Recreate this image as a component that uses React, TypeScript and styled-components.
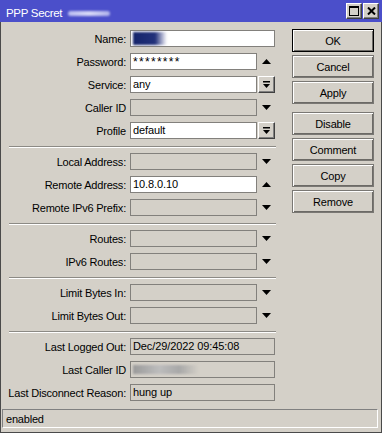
import React from "react";
import styled, { createGlobalStyle } from "styled-components";

const Global = createGlobalStyle`
  html, body { margin: 0; padding: 0; background: #d4d0c8; }
  body {
    font-family: "Liberation Sans", Arial, sans-serif;
    font-size: 11px;
    color: #000;
  }
  * { box-sizing: border-box; }
`;

const Window = styled.div`
  width: 382px;
  height: 433px;
  display: flex;
  flex-direction: column;
  background: #d4d0c8;
  overflow: hidden;
`;

const TitleBar = styled.div`
  height: 22px;
  flex: none;
  background: #4b4fca;
  display: flex;
  align-items: center;
  padding: 0 3px 0 6px;
`;

const TitleText = styled.span`
  color: #fff;
  font-size: 11.5px;
  letter-spacing: -0.3px;
  padding-top: 3px;
`;

const TitleBlur = styled.span`
  display: inline-block;
  width: 42px;
  height: 5px;
  margin: 4px 0 0 6px;
  border-radius: 3px;
  background: linear-gradient(to right, #b9bcf0, #d8d9f7 50%, #aeb1ea);
  filter: blur(1px);
`;

const TitleButtons = styled.div`
  margin-left: auto;
  display: flex;
  gap: 1px;
`;

const TitleButton = styled.div`
  width: 16px;
  height: 16px;
  background: #d4d0c8;
  border: 1px solid;
  border-color: #fff #404040 #404040 #fff;
  box-shadow: inset -1px -1px #808080;
  display: flex;
  align-items: center;
  justify-content: center;
`;

const Frame = styled.div`
  flex: 1;
  display: flex;
  flex-direction: column;
  border-left: 1px solid #4a4a4a;
  border-right: 1px solid #4a4a4a;
  border-bottom: 1px solid #4a4a4a;
`;

const Content = styled.div`
  display: flex;
`;

const Form = styled.div`
  width: 275px;
  padding-top: 8px;
  display: flex;
  flex-direction: column;
`;

const Group = styled.div`
  display: flex;
  flex-direction: column;
  gap: 6px;
`;

const Separator = styled.div`
  margin: 7px 0 5px 8px;
  height: 2px;
  border-top: 1px solid #8c8a85;
  border-bottom: 1px solid #fff;
`;

const Row = styled.div`
  display: grid;
  grid-template-columns: 129px 145px;
  height: 17px;
  align-items: center;
`;

const Label = styled.div`
  text-align: right;
  padding-right: 4px;
  white-space: nowrap;
  letter-spacing: -0.2px;
`;

const Control = styled.div`
  display: flex;
  height: 17px;
  width: 145px;
`;

const Field = styled.div<{ $white?: boolean; $short?: boolean }>`
  width: ${(p) => (p.$short ? "127px" : "145px")};
  height: 17px;
  border: 1px solid #82807c;
  background: ${(p) => (p.$white ? "#fff" : "#d4d0c8")};
  padding: 0 2px;
  line-height: 15px;
  white-space: nowrap;
  overflow: hidden;
  display: flex;
  align-items: center;
  letter-spacing: -0.1px;
`;

const Secret = styled.span`
  font-size: 12px;
  letter-spacing: 1.3px;
  padding-top: 2px;
`;

const Trailing = styled.div`
  width: 18px;
  display: flex;
  align-items: center;
  justify-content: center;
`;

const DropButton = styled.div`
  width: 17px;
  height: 17px;
  margin-left: 1px;
  border: 1px solid;
  border-color: #fff #404040 #404040 #fff;
  box-shadow: inset -1px -1px #808080;
  background: #d4d0c8;
  display: flex;
  align-items: center;
  justify-content: center;
`;

const NameBlur = styled.span`
  display: inline-block;
  width: 34px;
  height: 13px;
  background: linear-gradient(to right, #15246a 0%, #22317a 65%, rgba(60, 70, 140, 0.3) 90%, rgba(255,255,255,0) 100%);
  filter: blur(0.8px);
`;

const CallerBlur = styled.span`
  display: inline-block;
  width: 66px;
  height: 9px;
  background: linear-gradient(to right, #9a9a9a, #bdbdbd 40%, #a8a8a8 70%, rgba(212,208,200,0));
  filter: blur(1.2px);
`;

const Buttons = styled.div`
  margin-left: 16px;
  padding-top: 7px;
  width: 82px;
  display: flex;
  flex-direction: column;
  gap: 3px;
`;

const Button = styled.div<{ $default?: boolean; $spaced?: boolean }>`
  height: 23px;
  display: flex;
  align-items: center;
  justify-content: center;
  border: 1px solid ${(p) => (p.$default ? "#000" : "#7a7874")};
  box-shadow: inset 1px 1px #fff, inset -1px -1px #6c6a66;
  background: #d4d0c8;
  margin-top: ${(p) => (p.$spaced ? "5px" : "0")};
  letter-spacing: -0.2px;
`;

const StatusBar = styled.div`
  margin: auto 3px 4px 1px;
  height: 19px;
  border: 1px solid;
  border-color: #808080 #fff #fff #808080;
  padding: 0 3px;
  display: flex;
  align-items: center;
  letter-spacing: -0.2px;
`;

const Up = () => (
  <svg width="9" height="5" viewBox="0 0 9 5">
    <polygon points="0,5 9,5 4.5,0" fill="#000" />
  </svg>
);
const Down = () => (
  <svg width="9" height="5" viewBox="0 0 9 5">
    <polygon points="0,0 9,0 4.5,5" fill="#000" />
  </svg>
);
const DropIcon = () => (
  <svg width="7" height="8" viewBox="0 0 7 8">
    <rect x="0" y="0" width="7" height="1.5" fill="#000" />
    <polygon points="0,3 7,3 3.5,7" fill="#000" />
  </svg>
);

type Trail = "up" | "down" | "drop" | undefined;

const FormRow: React.FC<{
  label: string;
  value?: React.ReactNode;
  white?: boolean;
  trail?: Trail;
}> = ({ label, value, white, trail }) => (
  <Row>
    <Label>{label}</Label>
    <Control>
      <Field $white={white} $short={!!trail}>
        {value}
      </Field>
      {trail === "up" && (
        <Trailing>
          <Up />
        </Trailing>
      )}
      {trail === "down" && (
        <Trailing>
          <Down />
        </Trailing>
      )}
      {trail === "drop" && (
        <DropButton>
          <DropIcon />
        </DropButton>
      )}
    </Control>
  </Row>
);

export default function App() {
  return (
    <>
      <Global />
      <Window>
        <TitleBar>
          <TitleText>PPP Secret</TitleText>
          <TitleBlur />
          <TitleButtons>
            <TitleButton>
              <svg width="10" height="10" viewBox="0 0 10 10">
                <rect x="0.5" y="0.5" width="9" height="9" fill="none" stroke="#000" />
                <rect x="0" y="0" width="10" height="2" fill="#000" />
              </svg>
            </TitleButton>
            <TitleButton>
              <svg width="9" height="8" viewBox="0 0 9 8">
                <path d="M1 0.5 L8 7.5 M8 0.5 L1 7.5" stroke="#000" strokeWidth="2" />
              </svg>
            </TitleButton>
          </TitleButtons>
        </TitleBar>
        <Frame>
          <Content>
            <Form>
              <Group>
                <FormRow label="Name:" white value={<NameBlur />} />
                <FormRow label="Password:" white value={<Secret>********</Secret>} trail="up" />
                <FormRow label="Service:" white value="any" trail="drop" />
                <FormRow label="Caller ID" trail="down" />
                <FormRow label="Profile" white value="default" trail="drop" />
              </Group>
              <Separator />
              <Group>
                <FormRow label="Local Address:" trail="down" />
                <FormRow label="Remote Address:" white value="10.8.0.10" trail="up" />
                <FormRow label="Remote IPv6 Prefix:" trail="down" />
              </Group>
              <Separator />
              <Group>
                <FormRow label="Routes:" trail="down" />
                <FormRow label="IPv6 Routes:" trail="down" />
              </Group>
              <Separator />
              <Group>
                <FormRow label="Limit Bytes In:" trail="down" />
                <FormRow label="Limit Bytes Out:" trail="down" />
              </Group>
              <Separator />
              <Group>
                <FormRow label="Last Logged Out:" value="Dec/29/2022 09:45:08" />
                <FormRow label="Last Caller ID" value={<CallerBlur />} />
                <FormRow label="Last Disconnect Reason:" value="hung up" />
              </Group>
            </Form>
            <Buttons>
              <Button $default>OK</Button>
              <Button>Cancel</Button>
              <Button>Apply</Button>
              <Button $spaced>Disable</Button>
              <Button>Comment</Button>
              <Button>Copy</Button>
              <Button>Remove</Button>
            </Buttons>
          </Content>
          <StatusBar>enabled</StatusBar>
        </Frame>
      </Window>
    </>
  );
}
